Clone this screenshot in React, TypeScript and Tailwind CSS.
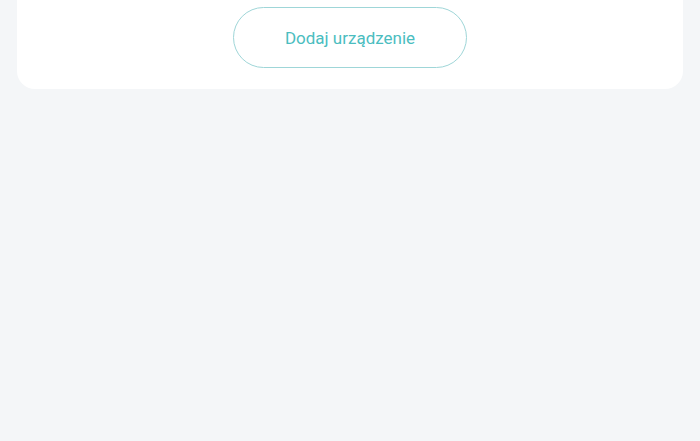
export default function App() {
  return (
    <div className="min-h-[441px] w-full bg-[#f4f6f8] px-[17px] font-['Roboto',sans-serif]">
      <div className="flex justify-center rounded-b-[18px] bg-white pb-[21px] pt-[7px]">
        <button
          type="button"
          className="h-[61px] w-[234px] rounded-full border border-[#9fd6d8] bg-white pt-[2px] text-[17px] text-[#4bbdbf]"
        >
          Dodaj urządzenie
        </button>
      </div>
    </div>
  );
}
